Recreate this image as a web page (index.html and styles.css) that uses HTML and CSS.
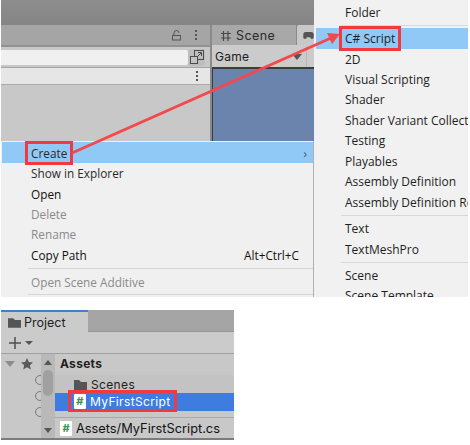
FILE: index.html
```html
<!DOCTYPE html>
<html lang="en">
<head>
    <meta charset="UTF-8">
    <meta name="viewport" content="width=device-width, initial-scale=1.0">
    <title>My First Script</title>
    <link rel="stylesheet" href="styles.css">
</head>
<body>

<!-- Step 1: the editor with the Create menu open -->
<div class="shot-top">
    <div class="dark-strip"></div>
    <div class="panes">
        <div class="pane-left">
            <div class="tabbar-left">
                <svg class="lock-icon" width="10" height="11" viewBox="0 0 10 11"><path d="M2 5V3a2.500 2.500 0 0 1 5 0" fill="none" stroke="#555" stroke-width="1"/><rect x="0.500" y="5.500" width="8" height="4.500" fill="none" stroke="#555"/></svg>
                <span class="kebab"><i></i><i></i><i></i></span>
            </div>
            <div class="search-row">
                <div class="search-field"></div>
                <div class="search-btn">
                    <svg width="14" height="14" viewBox="0 0 14 14"><rect x="4.500" y="0.500" width="9" height="9" fill="none" stroke="#4a4a4a"/><rect x="0.500" y="6.500" width="7" height="7" fill="#c4c4c4" stroke="#4a4a4a"/><path d="M7 7l4-4M8 2.500h3.500V6" fill="none" stroke="#4a4a4a"/></svg>
                </div>
            </div>
            <div class="crumb-row"><span class="kebab"><i></i><i></i><i></i></span></div>
            <div class="pane-body"></div>
        </div>
        <div class="pane-right">
            <div class="tabbar-right">
                <div class="tab-scene">
                    <svg width="12" height="12" viewBox="0 0 12 12"><path d="M3.500 1v10M8 1v10M1 3.500h10M1 8h10" fill="none" stroke="#4a4a4a" stroke-width="1.200"/></svg>
                    <span>Scene</span>
                </div>
                <div class="tab-game">
                    <svg width="13" height="7" viewBox="0 0 12 8"><path d="M3 0h6a3 3 0 0 1 3 3v3a2 2 0 0 1-4 0H4a2 2 0 0 1-4 0V3a3 3 0 0 1 3-3z" fill="#555"/></svg>
                </div>
            </div>
            <div class="game-bar">
                <span class="game-label">Game</span>
                <span class="tri-down"></span>
                <span class="game-sep"></span>
            </div>
            <div class="game-view"></div>
        </div>
    </div>

    <div class="context-menu">
        <div class="menu-row active"><span class="mark">Create</span><span class="chevron">›</span></div>
        <div class="menu-row">Show in Explorer</div>
        <div class="menu-row strong">Open</div>
        <div class="menu-row off">Delete</div>
        <div class="menu-row off">Rename</div>
        <div class="menu-row strong"><span>Copy Path</span><span class="shortcut">Alt+Ctrl+C</span></div>
        <div class="menu-sep"></div>
        <div class="menu-row off">Open Scene Additive</div>
        <div class="menu-sep"></div>
    </div>

    <div class="sub-menu">
        <div class="sub-row">Folder</div>
        <div class="sub-sep"></div>
        <div class="sub-row active"><span class="mark">C# Script</span></div>
        <div class="sub-row">2D</div>
        <div class="sub-row">Visual Scripting</div>
        <div class="sub-row">Shader</div>
        <div class="sub-row">Shader Variant Collection</div>
        <div class="sub-row">Testing</div>
        <div class="sub-row">Playables</div>
        <div class="sub-row">Assembly Definition</div>
        <div class="sub-row">Assembly Definition Reference</div>
        <div class="sub-sep"></div>
        <div class="sub-row">Text</div>
        <div class="sub-row">TextMeshPro</div>
        <div class="sub-sep"></div>
        <div class="sub-row">Scene</div>
        <div class="sub-row">Scene Template</div>
    </div>

    <!-- red arrow from Create to C# Script -->
    <svg class="arrow" width="468" height="297" viewBox="0 0 468 297">
        <path d="M72 153L331 38" fill="none" stroke="#f4484c" stroke-width="3"/>
        <path d="M340 34L327 33L332 44z" fill="#f4484c"/>
    </svg>
</div>

<!-- Step 2: the new script in the Project window -->
<div class="shot-bottom">
    <div class="project-tabs">
        <div class="project-tab">
            <svg width="13" height="11" viewBox="0 0 15 12"><path d="M0 1h6l2 2h7v9H0z" fill="#555"/></svg>
            <span>Project</span>
        </div>
    </div>
    <div class="project-bar">
        <svg width="14" height="14" viewBox="0 0 14 14"><path d="M7 1v12M1 7h12" fill="none" stroke="#505050" stroke-width="1.500"/></svg>
        <span class="tri-down small"></span>
    </div>
    <div class="project-main">
        <div class="tree">
            <div class="tree-head">
                <span class="tri-down tree-tri"></span>
                <svg width="12" height="12" viewBox="0 0 13 13"><path d="M6.500 0l2 4.400 4.500.5-3.400 3 1 4.600-4.100-2.400-4.100 2.400 1-4.600L0 4.900l4.500-.5z" fill="#5a5a5a"/></svg>
            </div>
            <div class="tree-items"><i></i><i></i><i></i></div>
        </div>
        <div class="scroll">
            <span class="tri-up"></span>
            <span class="thumb"></span>
            <span class="tri-down scroll-down"></span>
        </div>
        <div class="files">
            <div class="files-title">Assets</div>
            <div class="file-row folder-row">
                <svg width="13" height="11" viewBox="0 0 13 11"><path d="M0 1h5l2 2h6v8H0z" fill="#555"/></svg>
                <span>Scenes</span>
            </div>
            <div class="file-row selected">
                <span class="mark">
                    <span class="script-icon">#</span>
                    <span>MyFirstScript</span>
                </span>
            </div>
            <div class="file-gap"></div>
            <div class="file-path">
                <span class="script-icon">#</span>
                <span>Assets/MyFirstScript.cs</span>
            </div>
        </div>
    </div>
</div>

</body>
</html>
```

FILE: styles.css
```css
body {
    font-family: 'Open Sans', sans-serif;
    background-color: #fff;
    margin: 0;
    padding: 0;
    width: 470px;
    height: 445px;
    overflow: hidden;
}

/* top screenshot */
.shot-top {
    position: relative;
    width: 467px;
    height: 297px;
    margin-left: 1px;
    overflow: hidden;
    background-color: #f0f0f0;
}

.dark-strip {
    height: 25px;
    background: linear-gradient(#8d8d8d, #858585);
}

.panes {
    display: flex;
    gap: 2px;
    background-color: #8a8a8a;
    height: 116px;
}

.pane-left {
    width: 209px;
    display: flex;
    flex-direction: column;
}

.tabbar-left {
    height: 20px;
    background-color: #a5a5a5;
    border-bottom: 2px solid #929292;
    display: flex;
    align-items: center;
    justify-content: flex-end;
    gap: 13px;
    padding-right: 13px;
}

.kebab {
    display: flex;
    flex-direction: column;
    gap: 2px;
}

.kebab i {
    display: block;
    width: 2px;
    height: 2px;
    background-color: #555;
}

.search-row {
    height: 20px;
    background-color: #c8c8c8;
    display: flex;
    align-items: center;
    padding-right: 5px;
}

.search-field {
    flex: 1;
    height: 15px;
    background-color: #f0f0f0;
    border-radius: 0 2px 2px 0;
}

.search-btn {
    width: 17px;
    height: 17px;
    background-color: #bdbdbd;
    border-radius: 3px;
    display: flex;
    align-items: center;
    justify-content: center;
}

.crumb-row {
    height: 16px;
    background-color: #e6e6e6;
    border-top: 1px solid #a5a5a5;
    border-bottom: 1px solid #ababab;
    display: flex;
    align-items: center;
    justify-content: flex-end;
    padding-right: 12px;
}

.pane-body {
    flex: 1;
    background-color: #c8c8c8;
}

.pane-right {
    flex: 1;
    display: flex;
    flex-direction: column;
}

.tabbar-right {
    height: 20px;
    display: flex;
    background-color: #8a8a8a;
}

.tab-scene {
    width: 84px;
    background-color: #a8a8a8;
    display: flex;
    align-items: center;
    gap: 4px;
    padding: 1px 0 0 8px;
    box-sizing: border-box;
    font-family: 'Inter', sans-serif;
    font-size: 12.5px;
    letter-spacing: 0.4px;
    color: #2a2a2a;
}

.tab-game {
    width: 30px;
    margin-left: 1px;
    background-color: #c8c8c8;
    border-radius: 2px 0 0 0;
    display: flex;
    align-items: center;
    padding-left: 5px;
    box-sizing: border-box;
}

.game-bar {
    height: 22px;
    padding: 1px 0 0 3px;
    box-sizing: border-box;
    background-color: #cbcbcb;
    display: flex;
    align-items: center;
    font-family: 'Inter', sans-serif;
    font-size: 12px;
    color: #1c1c1c;
}

.game-label {
    width: 77px;
    letter-spacing: 0.3px;
}

.game-sep {
    width: 1px;
    height: 22px;
    background-color: #b5b5b5;
    margin-left: 4px;
}

.game-view {
    flex: 1;
    background-color: #6a84ae;
    border-top: 2px solid #3c3c3c;
    border-left: 1px solid #3c3c3c;
}

.tri-down {
    width: 0;
    height: 0;
    border-left: 5px solid transparent;
    border-right: 5px solid transparent;
    border-top: 6px solid #555;
}

.tri-down.small {
    border-left-width: 4px;
    border-right-width: 4px;
    border-top-width: 4px;
}

/* menus */
.context-menu {
    position: absolute;
    left: 1px;
    top: 141px;
    width: 311px;
    height: 156px;
    background-color: #f0f0f0;
    border-right: 1px solid #b0b0b0;
    padding-top: 1px;
    font-size: 11.8px;
}

.menu-row {
    height: 20.4px;
    display: flex;
    align-items: center;
    justify-content: space-between;
    padding-left: 29px;
    color: #2a2a2a;
}

.menu-row.strong {
    color: #111;
}

.menu-row.off {
    color: #8a8a8a;
}

.menu-row.active,
.sub-row.active {
    background-color: #90c8f6;
}

.menu-row.active {
    height: 21px;
    padding-top: 1px;
    box-sizing: border-box;
}

.chevron {
    margin-right: 6px;
    color: #555;
}

.shortcut {
    margin-right: 14px;
}

.menu-sep {
    height: 1px;
    margin: 3px 0 3px 26px;
    background-color: #d6d6d6;
}

.menu-sep:last-child {
    margin-top: 2px;
}

.sub-menu {
    position: absolute;
    left: 313px;
    top: 0;
    width: 154px;
    height: 297px;
    padding-top: 2px;
    box-sizing: border-box;
    overflow: hidden;
    background-color: #f1f1f1;
    font-size: 12px;
    color: #1e1e1e;
}

.sub-row {
    height: 20.45px;
    display: flex;
    align-items: center;
    padding-left: 31px;
    white-space: nowrap;
}

.sub-row.active {
    margin-left: 2px;
    padding-left: 29px;
}

.sub-sep {
    height: 1px;
    margin: 3px 0 2px 27px;
    background-color: #d8d8d8;
}

/* red annotations */
.mark {
    display: inline-flex;
    align-items: center;
    outline: 3px solid #f03a40;
    outline-offset: -1px;
    padding: 2px 4px;
    margin-left: -4px;
}

.arrow {
    position: absolute;
    left: -1px;
    top: 0;
    pointer-events: none;
}

/* bottom screenshot */
.shot-bottom {
    width: 233px;
    margin: 13px 0 0 1px;
    font-family: 'Inter', sans-serif;
    color: #1e1e1e;
}

.project-tabs {
    height: 21px;
    background-color: #a5a5a5;
    border-bottom: 1px solid #959595;
    display: flex;
}

.project-tab {
    width: 87px;
    height: 22px;
    box-sizing: border-box;
    background-color: #cbcbcb;
    border-top: 2px solid #3f80c8;
    display: flex;
    align-items: center;
    gap: 3px;
    padding-left: 7px;
    font-size: 12.5px;
}

.project-bar {
    height: 22px;
    padding: 1px 0 0 7px;
    box-sizing: border-box;
    background-color: #cbcbcb;
    border-bottom: 1px solid #a0a0a0;
    display: flex;
    align-items: center;
    gap: 3px;
}

.project-main {
    display: flex;
    height: 84px;
    border-bottom: 2px solid #7c7c7c;
    background-color: #c8c8c8;
}

.tree {
    width: 40px;
    flex-shrink: 0;
    overflow: hidden;
}

.tree-head {
    display: flex;
    align-items: center;
    gap: 6px;
    padding: 2px 0 0 4px;
    height: 15px;
}

.tree-tri {
    border-top-color: #8c8c8c;
}

.tree-items {
    display: flex;
    flex-direction: column;
    gap: 6px;
    padding: 4px 0 0 34px;
}

.tree-items i {
    display: block;
    width: 10px;
    height: 10px;
    box-sizing: border-box;
    border: 1.5px solid #7a7a7a;
    border-radius: 50%;
}

.scroll {
    width: 14px;
    flex-shrink: 0;
    background-color: #b9b9b9;
    display: flex;
    flex-direction: column;
    align-items: center;
    padding-top: 6px;
    box-sizing: border-box;
}

.tri-up {
    width: 0;
    height: 0;
    border-left: 4px solid transparent;
    border-right: 4px solid transparent;
    border-bottom: 5px solid #555;
}

.thumb {
    width: 10px;
    height: 26px;
    margin-top: 5px;
    background-color: #a0a0a0;
    border-radius: 5px;
}

.scroll-down {
    margin-top: 32px;
    border-left-width: 4px;
    border-right-width: 4px;
    border-top-width: 5px;
}

.files {
    flex: 1;
    min-width: 0;
}

.files-title {
    height: 21px;
    display: flex;
    align-items: center;
    padding: 0 0 2px 5px;
    box-sizing: border-box;
    font-size: 12px;
    font-weight: 700;
    letter-spacing: 0.3px;
}

.file-row {
    height: 18px;
    display: flex;
    align-items: center;
    gap: 4px;
    padding-left: 19px;
    font-size: 12px;
    letter-spacing: 0.35px;
}

.folder-row {
    background-color: #c3c3c3;
}

.file-row.selected {
    background-color: #3e7ddf;
    color: #fff;
}

.file-row .mark {
    gap: 4px;
    padding: 1px 5px 1px 4px;
    height: 16px;
    margin-top: -2px;
}

.script-icon {
    display: inline-flex;
    align-items: center;
    justify-content: center;
    width: 12px;
    height: 15px;
    background-color: #fff;
    color: #3d9150;
    font-size: 11px;
    font-weight: 700;
    border-radius: 1px;
}

.file-gap {
    height: 6px;
    border-bottom: 1px solid #a8a8a8;
}

.file-path {
    display: flex;
    align-items: center;
    gap: 4px;
    height: 20px;
    padding-left: 5px;
    font-size: 12.8px;
    color: #111;
}
```
